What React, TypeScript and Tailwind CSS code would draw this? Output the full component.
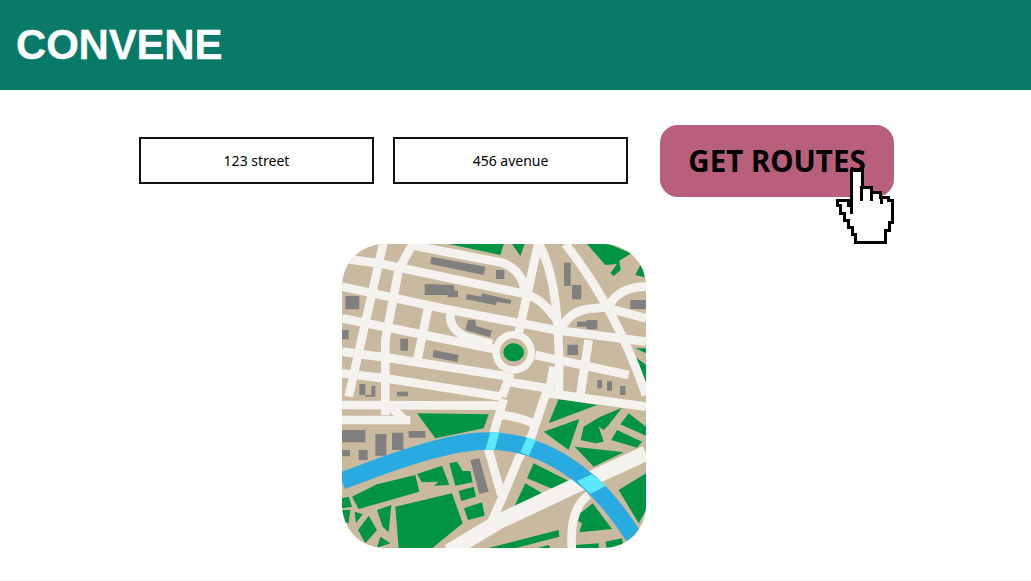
const greens = [
  // top
  '320,12 485,12 475,45',
  '510,12 548,12 535,48',
  '735,12 800,12 868,40 832,62 836,90 815,108 805,100 825,72 790,75',
  '880,105 895,75 912,85 908,112',
  '880,325 912,325 912,340',
  '880,350 912,375 912,465 890,440',
]
const greensBottom = [
  '225,55 440,58 425,100 280,130',
  '650,12 765,30 620,85',
  '605,110 712,72 680,165',
  '716,135 725,95 775,65 840,38 800,90 785,105 770,95 785,140 760,145',
  '835,88 860,55 912,95 912,122',
  '808,135 825,105 900,140 885,158',
  '698,155 845,172 755,215',
  '575,205 680,258 640,285 555,250',
  '550,265 610,300 512,345',
  '830,285 912,235 912,345 890,385',
  '225,237 300,212 322,270 275,272 290,260 240,262',
  '322,205 345,200 362,228 385,228 392,262 340,272',
  '350,288 395,275 402,305 358,318',
  '366,340 420,322 428,362 378,375',
  '30,305 105,268 220,240 232,290 50,342',
  '160,335 330,295 362,385 270,460 170,460',
  '0,310 20,305 30,335 0,340',
  '0,345 25,345 20,385 10,380',
  '38,350 62,358 42,385',
  '80,362 105,405 70,445 48,405',
  '105,345 148,330 140,412 122,395',
  '115,425 145,445 105,458',
  '435,460 650,405 652,425 480,470',
  '715,355 752,325 810,402 712,412 720,385 708,378',
  '700,450 770,445 770,465 705,465',
  '790,440 840,430 845,455 795,465',
  '565,465 620,450 628,465',
]
const grays = [
  '268,50 430,80 425,105 265,72',
  '462,90 487,90 487,117 462,117',
  '248,132 335,135 338,152 348,152 348,172 318,172 316,165 248,165',
  '375,162 418,170 420,160 508,180 505,192 465,185 462,196 372,178',
  '10,168 52,168 52,208 10,208',
  '0,270 20,270 20,298 0,298',
  '378,240 400,240 402,258 450,272 444,292 370,270',
  '175,296 198,296 198,332 175,332',
  '275,330 350,345 346,366 272,352',
  '666,68 686,68 686,138 666,138',
  '690,135 718,135 718,178 690,178',
  '865,180 912,180 912,207 865,207',
  '705,245 732,245 735,240 766,240 766,268 735,268 732,260 705,260',
  '676,314 708,314 708,345 676,345',
  '766,420 780,420 780,445 766,445',
  '795,424 810,424 810,452 795,452',
  '834,438 850,438 850,465 834,465',
  '52,432 70,432 70,465 52,465',
  '88,438 100,438 100,465 88,465',
  '165,455 198,455 198,465 165,465',
]
const graysBottom = [
  '0,105 70,105 70,142 0,142',
  '100,117 133,117 133,182 100,182',
  '150,113 184,113 184,165 150,165',
  '200,108 250,108 250,128 200,128',
  '0,165 24,165 24,184 0,184',
  '50,165 77,165 77,195 50,195',
  '385,195 412,190 440,290 412,297',
  '70,0 100,0 100,5 70,5',
  '165,0 198,0 198,4 165,4',
]
const roads = [
  'M125 5 L20 470',
  'M215 5 L170 90 L130 300 L130 470',
  'M0 55 L110 70 L540 160 Q600 170 650 250',
  'M0 140 L300 205 L640 270 L912 305',
  'M0 235 L470 330',
  'M0 335 L150 355 L490 408',
  'M0 400 L130 415 L480 470',
  'M260 195 L225 365',
  'M330 205 Q310 260 370 290 L450 312',
  'M590 5 L530 280',
  'M590 12 Q660 130 650 465',
  'M670 12 Q820 200 912 465',
  'M650 280 Q680 205 760 205 L800 200 Q830 140 912 140',
  'M800 205 L912 235',
  'M740 300 L715 465',
  'M580 345 L860 405',
  'M635 380 L620 465',
  'M505 400 L480 470',
  'M495 425 L630 447',
  'M220 18 L480 68 Q540 90 548 150',
]
const roadsBottom = [
  'M0 30 L470 32',
  'M600 -8 L912 35',
  'M0 75 L205 75',
  'M130 0 L130 60',
  'M140 30 L185 72',
  'M485 12 L440 165 L478 300',
  'M610 0 L570 120 L530 190 L480 310 L440 400',
  'M480 60 Q560 70 585 95',
  'M740 300 Q680 340 690 470',
]

export default function App() {
  return (
    <div className="h-[581px] w-[1031px] overflow-hidden bg-white border-b border-[#f1f5f4]">
      <header className="flex h-[90px] items-center bg-[#097968] pl-4">
        <h1 className="font-['Liberation_Sans',sans-serif] text-[42px] font-bold leading-none tracking-[-0.2px] text-white [-webkit-text-stroke:0.3px_white]">CONVENE</h1>
      </header>

      <div className="relative mt-[35px] flex w-max items-center pl-[139px]">
        <input
          readOnly
          value="123 street"
          className="mb-px h-[47px] w-[235px] border-2 border-[#111] bg-white text-center font-['Noto_Sans',sans-serif] text-sm text-black outline-none"
        />
        <input
          readOnly
          value="456 avenue"
          className="mb-px ml-[19px] h-[47px] w-[235px] border-2 border-[#111] bg-white text-center font-['Noto_Sans',sans-serif] text-sm text-black outline-none"
        />
        <button className="ml-[32px] h-[72px] w-[234px] rounded-[18px] bg-[#b85f7c] font-['Noto_Sans',sans-serif] text-[29.5px] font-bold text-black">
          GET ROUTES
        </button>

        {/* Pointer */}
        <svg className="absolute left-[835px] top-[43px]" width="62" height="78" viewBox="835 168 62 78" shapeRendering="crispEdges">
          <path
            d="M851 170 H862 V187 H871 V192 H880 V197 H888 V200 H892 V222 H889 V230 H885 V242 H855 V234 H852 V227 H848 V220 H844 V213 H840 V205 H837 V200 H848 V205 H851 Z"
            fill="#fff"
            stroke="#000"
            strokeWidth="3"
          />
          <path d="M861 186 V201 M871 191 V201 M881 196 V204 M851 204 V214" fill="none" stroke="#000" strokeWidth="3" />
        </svg>
      </div>

      <div className="ml-[342px] mt-[47px]">
        <svg className="rounded-[42px]" width="304" height="304" viewBox="0 12 912 912">
          <rect x="0" y="12" width="912" height="912" fill="#c9b99f" />
          {greens.map(p => <polygon key={p} points={p} fill="#009444" />)}
          <g transform="translate(0 465)">
            {greensBottom.map(p => <polygon key={p} points={p} fill="#009444" />)}
          </g>
          <g fill="none" stroke="#f4f2ee" strokeWidth="26">
            {roads.map(d => <path key={d} d={d} />)}
            <g transform="translate(0 465)">
              {roadsBottom.map(d => <path key={d} d={d} />)}
              <path d="M320 470 L470 380 L700 272 L912 175" strokeWidth="46" />
            </g>
          </g>
          {/* Roundabout */}
          <circle cx="515" cy="337" r="64" fill="#f4f2ee" />
          <circle cx="515" cy="337" r="42" fill="#c9b99f" />
          <ellipse cx="515" cy="337" rx="31" ry="27" fill="#009444" />
          {grays.map(p => <polygon key={p} points={p} fill="#808080" />)}
          <g transform="translate(0 465)">
            {graysBottom.map(p => <polygon key={p} points={p} fill="#808080" />)}
            {/* River */}
            <path
              d="M0 258 C150 200 320 138 440 138 C560 138 660 190 745 265 C800 315 840 370 875 425"
              fill="none"
              stroke="#29abe2"
              strokeWidth="52"
            />
            <polygon points="445,112 472,112 458,164 430,164" fill="#5ce8ff" />
            <polygon points="555,126 582,135 560,182 535,172" fill="#5ce8ff" />
            <polygon points="750,238 792,272 745,297 705,258" fill="#5ce8ff" />
          </g>
        </svg>
      </div>
    </div>
  )
}
